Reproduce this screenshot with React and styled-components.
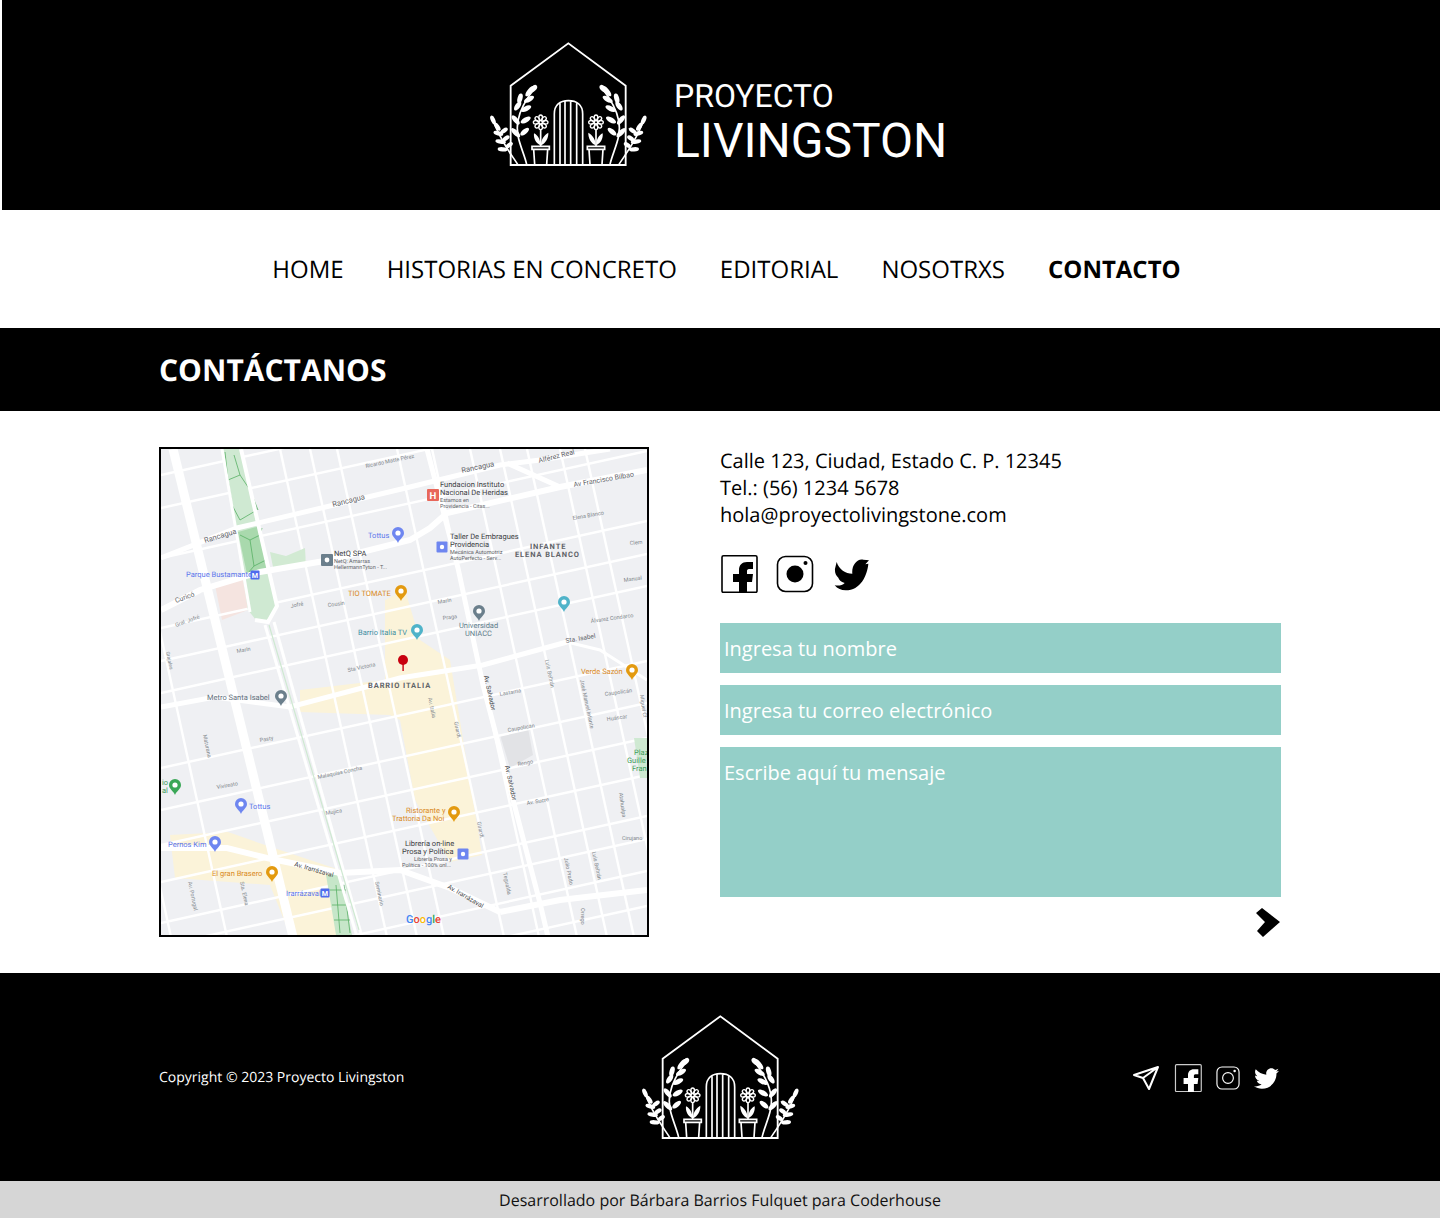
import React from 'react';
import styled, { createGlobalStyle } from 'styled-components';
import { FaTwitter } from 'react-icons/fa';

const GlobalStyle = createGlobalStyle`
    * { box-sizing: border-box; }
    body {
        margin: 0;
        background: #fff;
        color: #000;
        font-family: "Open Sans", sans-serif;
        text-rendering: geometricPrecision;
    }
`;

const TopHeader = styled.header`
    height: 210px;
    background: #000;
    margin-left: 2px;
    display: flex;
    justify-content: center;
    padding: 30px 0 0;
`;

const Brand = styled.div`
    display: flex;
    align-items: flex-start;
    width: 480px;
    margin-right: 2px;
    gap: 14px;
`;

const BrandText = styled.div`
    display: flex;
    flex-direction: column;
    color: #fff;
    font-family: Roboto, sans-serif;
    padding-top: 47px;
`;

const BrandSmall = styled.span`
    font-size: 32px;
    line-height: 38px;
`;

const BrandBig = styled.span`
    font-size: 48px;
    line-height: 50px;
    padding-top: 1px;
`;

const LogoSvg = styled.svg`
    display: block;
    width: 180px;
    height: 145px;
    flex: none;
    color: #fff;
`;

const Nav = styled.nav`
    height: 118px;
    display: flex;
    justify-content: center;
    align-items: center;
    gap: 43px;
    padding: 0 0 0 13px;
`;

const NavLink = styled.a`
    font-size: 24px;
    line-height: 33px;
    color: #000;
    text-decoration: none;
    font-weight: ${(p) => (p.$active ? 700 : 400)};
`;

const Banner = styled.div`
    height: 83px;
    background: #000;
    padding: 0 159px;
    display: flex;
    align-items: center;
`;

const BannerTitle = styled.h1`
    margin: 0;
    color: #fff;
    font-size: 30px;
    font-weight: 700;
`;

const Main = styled.main`
    display: flex;
    gap: 71px;
    padding: 36px 159px;
    height: 562px;
`;

const MapFrame = styled.div`
    width: 490px;
    height: 490px;
    flex: none;
    border: 2px solid #000;
    background: #eff0f3;
`;

const MapSvg = styled.svg`
    display: block;
    width: 486px;
    height: 486px;
    font-family: Roboto, sans-serif;
`;

const ContactColumn = styled.section`
    width: 561px;
    flex: none;
`;

const Address = styled.address`
    font-style: normal;
    font-size: 20px;
    line-height: 27px;
`;

const SocialRow = styled.div`
    display: flex;
    align-items: center;
    gap: 18px;
    margin-top: 27px;
    height: 38px;
`;

const Form = styled.form`
    display: flex;
    flex-direction: column;
    gap: 12px;
    margin-top: 30px;
`;

const fieldStyle = `
    display: block;
    width: 100%;
    border: 0;
    outline: 0;
    border-radius: 0;
    background: #94cfc8;
    color: #fff;
    font-family: "Open Sans", sans-serif;
    font-size: 20px;
    padding: 0 4px;
    &::placeholder { color: #fff; opacity: 1; }
`;

const Field = styled.input`
    ${fieldStyle}
    height: 50px;
`;

const MessageField = styled.textarea`
    ${fieldStyle}
    height: 150px;
    padding-top: 12px;
    line-height: 27px;
    resize: none;
`;

const SendButton = styled.button`
    align-self: flex-end;
    margin-top: -1px;
    width: 25px;
    height: 29px;
    padding: 0;
    border: 0;
    background: none;
    cursor: pointer;
    svg { display: block; }
`;

const Footer = styled.footer`
    height: 208px;
    background: #000;
    color: #fff;
    padding: 0 159px;
    display: flex;
    align-items: flex-start;
    justify-content: space-between;
    position: relative;
`;

const Copyright = styled.p`
    margin: 95px 0 0;
    width: 473px;
    font-size: 14px;
    line-height: 20px;
`;

const FooterLogo = styled.div`
    padding-top: 30px;
    flex: none;
`;

const FooterSocial = styled.div`
    display: flex;
    align-items: center;
    width: 469px;
    justify-content: flex-end;
    gap: 14px;
    margin-top: 92px;
    padding-right: 2px;
    height: 26px;
`;

const CreditBar = styled.div`
    height: 37px;
    background: #d6d6d6;
    display: flex;
    align-items: center;
    justify-content: center;
    font-size: 16px;
    color: #111;
`;

const leaves = [
    [150, 183, -50, 20], [161, 176, -48, 13], [120, 205, -75, 15], [147, 208, -30, 17],
    [113, 228, -55, 16], [138, 236, -25, 17], [107, 270, -130, 17], [137, 270, -30, 17],
    [107, 308, -135, 18], [134, 305, -40, 16],
];

const outerLeaves = [
    [39, 270, -115, 14], [52, 290, -125, 14], [72, 302, -35, 13],
    [55, 310, -165, 15], [78, 325, -35, 12], [62, 335, -170, 16], [88, 345, -35, 12],
    [68, 358, -175, 15],
];

const Plants = () => (
    <g>
        <path d="M140 403 C130 360 104 320 114 272 C120 238 140 205 166 172" fill="none" stroke="currentColor" strokeWidth="5" />
        {leaves.map(([x, y, a, r], i) => (
            <ellipse key={i} cx={x} cy={y} rx={r} ry="7.5" fill="currentColor" transform={`rotate(${a} ${x} ${y})`} />
        ))}
        <path d="M113 403 C92 370 58 330 36 262" fill="none" stroke="currentColor" strokeWidth="5" />
        {outerLeaves.map(([x, y, a, r], i) => (
            <ellipse key={i} cx={x} cy={y} rx={r} ry="6.5" fill="currentColor" transform={`rotate(${a} ${x} ${y})`} />
        ))}
        <path d="M156 349 H208 V358 H156 Z M161 358 L164 403 M203 358 L200 403" fill="none" stroke="currentColor" strokeWidth="5" />
        <path d="M182 300 V348" stroke="currentColor" strokeWidth="5" />
        <path d="M181 346 C168 340 160 325 162 310 C174 316 182 330 181 346 Z M183 346 C196 340 206 325 205 308 C192 316 182 330 183 346 Z" fill="currentColor" />
        {[0, 45, 90, 135, 180, 225, 270, 315].map((a) => (
            <ellipse key={a} cx="182" cy="263" rx="5.5" ry="8" fill="none" stroke="currentColor" strokeWidth="4" transform={`rotate(${a} 182 277)`} />
        ))}
        <circle cx="182" cy="277" r="5" fill="none" stroke="currentColor" strokeWidth="4" />
    </g>
);

const Logo = () => (
    <LogoSvg viewBox="0 0 540 435">
        <path d="M92 405 V167 L265 40 L437 167 V405 Z" fill="none" stroke="currentColor" strokeWidth="5.5" />
        <path d="M223 403 V252 C223 225 240 212 265 212 C290 212 308 225 308 252 V403 M240 220 V403 M255 213 V403 M272 213 V403 M290 220 V403" fill="none" stroke="currentColor" strokeWidth="5" />
        <Plants />
        <g transform="translate(530 0) scale(-1 1)">
            <Plants />
        </g>
    </LogoSvg>
);

const FacebookIcon = ({ size, color, frame }) => (
    <svg width={size} height={size} viewBox="0 0 38 38" style={{ color }}>
        <rect x="2" y="0.8" width="35" height="36.6" rx="1.5" fill="none" stroke={frame} strokeWidth="1.6" />
        <path d="M19 38 V27 H13 V19 H19 V15 C19 10 22 7 27 7 H33 V14 H29 C27.5 14 27 15 27 16 V19 H33 L32 27 H27 V38 Z" fill="currentColor" />
    </svg>
);

const InstagramIcon = ({ size, color, outlined }) => (
    <svg width={size} height={size} viewBox="0 0 38 38" style={{ color }}>
        <rect x="1.5" y="1.5" width="35" height="35" rx="8" fill="none" stroke="currentColor" strokeWidth={outlined ? 1.8 : 1.6} />
        {outlined
            ? <circle cx="19" cy="19" r="8.5" fill="none" stroke="currentColor" strokeWidth="1.8" />
            : <circle cx="19" cy="19" r="8.5" fill="currentColor" />}
        <circle cx="29.5" cy="8" r="2" fill="currentColor" />
    </svg>
);

const BirdIcon = styled.svg`
    display: block;
    width: 35px;
    height: 35px;
    margin-left: 2px;
`;

const PlaneIcon = () => (
    <svg width="28" height="26" viewBox="0 0 28 26">
        <path d="M2 10 L26 2 L17 24 L11 13 Z M11 13 L26 2" fill="none" stroke="#fff" strokeWidth="2" strokeLinejoin="round" />
    </svg>
);

const nsStreets = [120, 280, 310, 337, 397, 432, 470, 500, 527, 560, 585, 64, 28];
const ewStreets = [455, 505, 575, 608, 640, 715, 757, 792, 829, 870, 893, 925, 960, 1000, 422];

const roads = [
    ['173,449 293,937', 9],
    ['161,558 237,528 410,487 500,465 540,460 610,449', 5],
    ['161,610 200,590 260,572 330,560 410,540 430,528 447,513 560,487 647,470', 6],
    ['507,463 560,487', 5],
    ['161,848 227,848 267,858 340,873 400,870 450,888 500,912', 6],
    ['500,912 560,900 647,890', 6],
    ['427,449 458,568 483,685 540,903 548,937', 5],
    ['161,707 215,697 290,707 400,678 483,665 567,642', 5],
    ['567,642 600,650 647,680', 3],
    ['222,449 250,612', 3],
    ['241,449 277,606 268,622 255,620', 4],
    ['265,625 357,937', 3],
    ['274,622 362,937', 3],
];

const labels = [
    ['Rancagua', 333, 507, 7.5, -14, '#5f6368'], ['Rancagua', 205, 543, 7.5, -17, '#5f6368'], ['Rancagua', 462, 473, 7.5, -12, '#5f6368'],
    ['Ricardo Matte Pérez', 366, 468, 5.5, -12, '#80868b'], ['Alférez Real', 539, 463, 7, -14, '#5f6368'], ['Av Francisco Bilbao', 574, 487, 7, -10, '#5f6368'],
    ['Elena Blanco', 573, 520, 5.5, -10, '#80868b'], ['Clem', 630, 545, 5.5, -6, '#80868b'], ['Manual', 624, 582, 5.5, -8, '#80868b'],
    ['Curicó', 176, 603, 7, -20, '#5f6368'], ['Gral. Jofré', 176, 627, 5.5, -20, '#80868b'], ['Jofré', 291, 608, 5.5, -12, '#80868b'],
    ['Cousin', 328, 607, 5.5, -8, '#80868b'], ['Marín', 237, 653, 5.5, -10, '#80868b'], ['Marín', 438, 604, 5.5, -10, '#80868b'],
    ['Praga', 443, 620, 5.5, -8, '#80868b'], ['Álvarez Condarco', 591, 623, 5.5, -8, '#80868b'], ['Sta. Isabel', 566, 643, 6.5, -10, '#5f6368'],
    ['Sta Victoria', 348, 672, 5.5, -12, '#80868b'], ['Lastarria', 500, 696, 5.5, -10, '#80868b'], ['Caupolicán', 605, 696, 5.5, -8, '#80868b'],
    ['Caupolicán', 508, 732, 5.5, -10, '#80868b'], ['Huáscar', 607, 721, 5.5, -8, '#80868b'], ['Rengo', 518, 766, 5.5, -10, '#80868b'],
    ['Av. Sucre', 527, 805, 5.5, -10, '#80868b'], ['Cirujano', 622, 840, 5.5, 0, '#80868b'], ['Pasty', 260, 742, 5.5, -10, '#80868b'],
    ['Vivireato', 217, 789, 5.5, -10, '#80868b'], ['Malaquías Concha', 318, 779, 5.5, -12, '#80868b'], ['Mujica', 326, 815, 5.5, -10, '#80868b'],
    ['Av. Irarrázaval', 294, 866, 6.5, 16, '#3c4043'], ['Av. Irarrázaval', 447, 888, 6.5, 30, '#3c4043'], ['Av. Salvador', 484, 676, 6.5, 78, '#3c4043'],
    ['Av. Salvador', 505, 766, 6.5, 78, '#3c4043'], ['Av. Italia', 428, 698, 5.5, 78, '#80868b'], ['Girardi', 454, 722, 5.5, 78, '#80868b'],
    ['Girardi', 477, 822, 5.5, 78, '#80868b'], ['Luis Beltrán', 545, 660, 5.5, 78, '#80868b'], ['José Manuel Infante', 580, 680, 5.5, 78, '#80868b'],
    ['Miguel Cl', 640, 695, 5.5, 82, '#80868b'], ['Atahualpa', 619, 793, 5.5, 82, '#80868b'], ['Luis Beltrán', 592, 852, 5.5, 78, '#80868b'],
    ['Julio Prado', 564, 858, 5.5, 78, '#80868b'], ['Tegualda', 503, 873, 5.5, 78, '#80868b'], ['Seminario', 375, 882, 5.5, 78, '#80868b'],
    ['Sta. Elena', 240, 882, 5.5, 78, '#80868b'], ['Av. Portugal', 188, 882, 5.5, 78, '#80868b'], ['Maturana', 203, 735, 5.5, 78, '#80868b'],
    ['Grajales', 166, 652, 5, 78, '#80868b'], ['Orrego', 581, 908, 5.5, 90, '#80868b'],
    ['Fundacion Instituto', 440, 487, 7.5, 0, '#3c4043'], ['Nacional De Heridas', 440, 495, 7.5, 0, '#3c4043'], ['Estamos en', 440, 502, 5.5, 0, '#5f6368'], ['Providencia - Citas...', 440, 508, 5.5, 0, '#5f6368'],
    ['Taller De Embragues', 450, 539, 7.5, 0, '#3c4043'], ['Providencia', 450, 547, 7.5, 0, '#3c4043'], ['Mecánica Automotriz', 450, 554, 5.5, 0, '#5f6368'], ['AutoPerfecto - Serv...', 450, 560, 5.5, 0, '#5f6368'],
    ['NetQ SPA', 334, 556, 7.5, 0, '#3c4043'], ['NetQ: Amarras', 334, 563, 5.5, 0, '#5f6368'], ['HellermannTyton - T...', 334, 569, 5.5, 0, '#5f6368'],
    ['Parque Bustamante', 186, 577, 7.5, 0, '#5b76ec'], ['Tottus', 368, 538, 7.5, 0, '#5b76ec'], ['TIO TOMATE', 348, 596, 7.5, 0, '#d98a1e'],
    ['Barrio Italia TV', 358, 635, 7.5, 0, '#3f8fa3'], ['Universidad', 459, 628, 7.5, 0, '#607d8b'], ['UNIACC', 465, 636, 7.5, 0, '#607d8b'],
    ['Verde Sazón', 581, 674, 7.5, 0, '#d98a1e'], ['Metro Santa Isabel', 207, 700, 7.5, 0, '#5f6f7c'], ['Tottus', 249, 809, 7.5, 0, '#5b76ec'],
    ['Pernos Kim', 168, 847, 7.5, 0, '#5b76ec'], ['El gran Brasero', 212, 876, 7.5, 0, '#d98a1e'], ['Irarrázaval', 286, 896, 7.5, 0, '#5b76ec'],
    ['Ristorante y', 406, 813, 7.5, 0, '#d98a1e'], ['Trattoria Da Noi', 392, 821, 7.5, 0, '#d98a1e'],
    ['Librería on-line', 405, 846, 7.5, 0, '#3c4043'], ['Prosa y Política', 402, 854, 7.5, 0, '#3c4043'], ['Librería Prosa y', 414, 861, 5.5, 0, '#5f6368'], ['Política - 100% onl...', 402, 867, 5.5, 0, '#5f6368'],
    ['Plaz', 634, 755, 7.5, 0, '#3f9c5a'], ['Guille', 627, 763, 7.5, 0, '#3f9c5a'], ['Fran', 632, 771, 7.5, 0, '#3f9c5a'],
    ['io', 162, 785, 7.5, 0, '#3f9c5a'], ['al', 162, 793, 7.5, 0, '#3f9c5a'],
];

const districts = [
    ['INFANTE', 530, 549], ['ELENA BLANCO', 515, 557], ['BARRIO ITALIA', 368, 688],
];

const pins = [
    [398, 543, '#6e86f0'], [401, 601, '#e39a10'], [417, 640, '#4fb3c9'], [479, 621, '#6b7f8c'], [564, 612, '#4fb3c9'],
    [632, 680, '#e39a10'], [281, 706, '#6b7f8c'], [175, 795, '#3aa757'], [241, 814, '#6e86f0'], [215, 852, '#6e86f0'],
    [272, 882, '#e39a10'], [454, 822, '#e39a10'],
];

const squares = [
    [433, 495, 12, '#e8675a', 'H'], [442, 547, 11, '#6e86f0', ''], [327, 560, 12, '#6b7f8c', ''], [255, 575, 9, '#4f6bed', 'M'],
    [325, 893, 9, '#4f6bed', 'M'], [463, 854, 11, '#6e86f0', ''],
];

const CityMap = () => (
    <MapSvg viewBox="161 449 486 486">
        <rect x="161" y="449" width="486" height="486" fill="#eff0f3" />
        <path d="M385 600 L405 590 L420 640 L450 660 L482 855 L450 862 L415 800 L400 720 L390 715 L300 712 L300 690 L385 680 Z" fill="#fbf3d9" />
        <path d="M170 835 L228 832 L265 845 L340 870 L345 935 L290 935 L270 885 L175 878 Z" fill="#fbf3d9" />
        <path d="M215 585 L247 578 L248 610 L222 620 Z" fill="#f5e4e0" />
        <path d="M500 735 L528 728 L533 755 L510 768 Z" fill="#e2e3e6" />
        {nsStreets.map((x) => (
            <line key={x} x1={x} y1="449" x2={x + 107} y2="937" stroke="#fff" strokeWidth="2.4" />
        ))}
        {ewStreets.map((y) => (
            <line key={y} x1="161" y1={y + 53} x2="647" y2={y - 54} stroke="#fff" strokeWidth="2.4" />
        ))}
        <path d="M270 552 L286 556 L305 548 L306 566 L274 572 Z" fill="#d2ead3" />
        <path d="M223 449 L242 449 L277 606 L268 620 L256 620 L248 610 Z" fill="#cfe9d2" />
        <path d="M238 532 L260 526 L269 570 L247 574 Z" fill="#a9d9ad" />
        <path d="M228 480 L240 475 L250 490 L257 510 L240 520 L232 505 Z M228 480 L225 452 M240 475 L234 455 M250 490 L258 510" fill="none" stroke="#58b065" strokeWidth="0.8" />
        <path d="M250 540 L260 535 L266 560 L254 566 Z M240 535 L250 540 M260 535 L262 528 M266 560 L269 570 M254 566 L248 573" fill="none" stroke="#58b065" strokeWidth="0.8" />
        <path d="M326 875 L340 873 L352 935 L336 935 Z" fill="#c6e6c9" />
        <path d="M330 890 H346 M332 905 H348 M334 920 H350 M336 885 L340 933 M344 885 L350 933" stroke="#58b065" strokeWidth="0.8" />
        <path d="M634 738 H647 V778 H640 Z" fill="#cfe9d2" />
        {roads.map(([points, width]) => (
            <polyline key={points} points={points} fill="none" stroke="#fff" strokeWidth={width} />
        ))}
        <line x1="269" y1="625" x2="359" y2="930" stroke="#cfe9d2" strokeWidth="1.2" />
        {labels.map(([text, x, y, size, rotate, color], i) => (
            <text key={i} x={x} y={y} fontSize={size} fill={color} transform={rotate ? `rotate(${rotate} ${x} ${y})` : undefined}>{text}</text>
        ))}
        {districts.map(([text, x, y]) => (
            <text key={text} x={x} y={y} fontSize="7.5" fontWeight="700" letterSpacing="0.9" fill="#5f6368">{text}</text>
        ))}
        {pins.map(([x, y, color]) => (
            <g key={`${x}-${y}`} transform={`translate(${x} ${y})`}>
                <path d="M0 0 C-1.5 -4 -6 -6 -6 -10 A6 6 0 1 1 6 -10 C6 -6 1.5 -4 0 0 Z" fill={color} />
                <circle cy="-10" r="2.6" fill="#fff" />
            </g>
        ))}
        {squares.map(([x, y, size, color, letter]) => (
            <g key={`${x}-${y}`}>
                <rect x={x - size / 2} y={y - size / 2} width={size} height={size} rx="1" fill={color} />
                {letter
                    ? <text x={x} y={y + size * 0.3} fontSize={size * 0.8} fontWeight="700" textAnchor="middle" fill="#fff">{letter}</text>
                    : <circle cx={x} cy={y} r={size * 0.2} fill="#fff" />}
            </g>
        ))}
        <circle cx="403" cy="660" r="5" fill="#c8000f" />
        <rect x="402.4" y="660" width="1.4" height="11" fill="#c8000f" />
        <text x="406" y="923" fontSize="11" fontWeight="500">
            <tspan fill="#4285f4">G</tspan>
            <tspan fill="#ea4335">o</tspan>
            <tspan fill="#fbbc05">o</tspan>
            <tspan fill="#4285f4">g</tspan>
            <tspan fill="#34a853">l</tspan>
            <tspan fill="#ea4335">e</tspan>
        </text>
    </MapSvg>
);

const App = () => (
    <>
        <GlobalStyle />
        <TopHeader>
            <Brand>
                <Logo />
                <BrandText>
                    <BrandSmall>PROYECTO</BrandSmall>
                    <BrandBig>LIVINGSTON</BrandBig>
                </BrandText>
            </Brand>
        </TopHeader>
        <Nav>
            <NavLink href="#">HOME</NavLink>
            <NavLink href="#">HISTORIAS EN CONCRETO</NavLink>
            <NavLink href="#">EDITORIAL</NavLink>
            <NavLink href="#">NOSOTRXS</NavLink>
            <NavLink href="#" $active>CONTACTO</NavLink>
        </Nav>
        <Banner>
            <BannerTitle>CONTÁCTANOS</BannerTitle>
        </Banner>
        <Main>
            <MapFrame>
                <CityMap />
            </MapFrame>
            <ContactColumn>
                <Address>
                    Calle 123, Ciudad, Estado C. P. 12345<br />
                    Tel.: (56) 1234 5678<br />
                    hola@proyectolivingstone.com
                </Address>
                <SocialRow>
                    <FacebookIcon size={38} color="#000" frame="#000" />
                    <InstagramIcon size={38} color="#000" />
                    <BirdIcon viewBox="370 40 105 105">
                        <path d="M378 55 C385 78 405 90 425 90 C422 65 440 43 458 48 L475 50 L464 62 L473 60 C470 95 450 140 405 140 C392 140 380 135 372 125 C385 127 395 125 402 118 C390 115 385 108 383 102 C375 95 372 85 373 75 Z" fill="#000" />
                    </BirdIcon>
                </SocialRow>
                <Form onSubmit={(e) => e.preventDefault()}>
                    <Field placeholder="Ingresa tu nombre" />
                    <Field placeholder="Ingresa tu correo electrónico" />
                    <MessageField placeholder="Escribe aquí tu mensaje" />
                    <SendButton type="submit" aria-label="Enviar">
                        <svg width="25" height="29" viewBox="0 0 25 29">
                            <polygon points="6,0 24,14 7,29 1,23 9,14 0,5" fill="#000" />
                        </svg>
                    </SendButton>
                </Form>
            </ContactColumn>
        </Main>
        <Footer>
            <Copyright>Copyright © 2023 Proyecto Livingston</Copyright>
            <FooterLogo>
                <Logo />
            </FooterLogo>
            <FooterSocial>
                <PlaneIcon />
                <FacebookIcon size={28} color="#fff" frame="#ccc" />
                <InstagramIcon size={24} color="#fff" outlined />
                <FaTwitter size={25} color="#fff" />
            </FooterSocial>
        </Footer>
        <CreditBar>Desarrollado por Bárbara Barrios Fulquet para Coderhouse</CreditBar>
    </>
);

export default App;
